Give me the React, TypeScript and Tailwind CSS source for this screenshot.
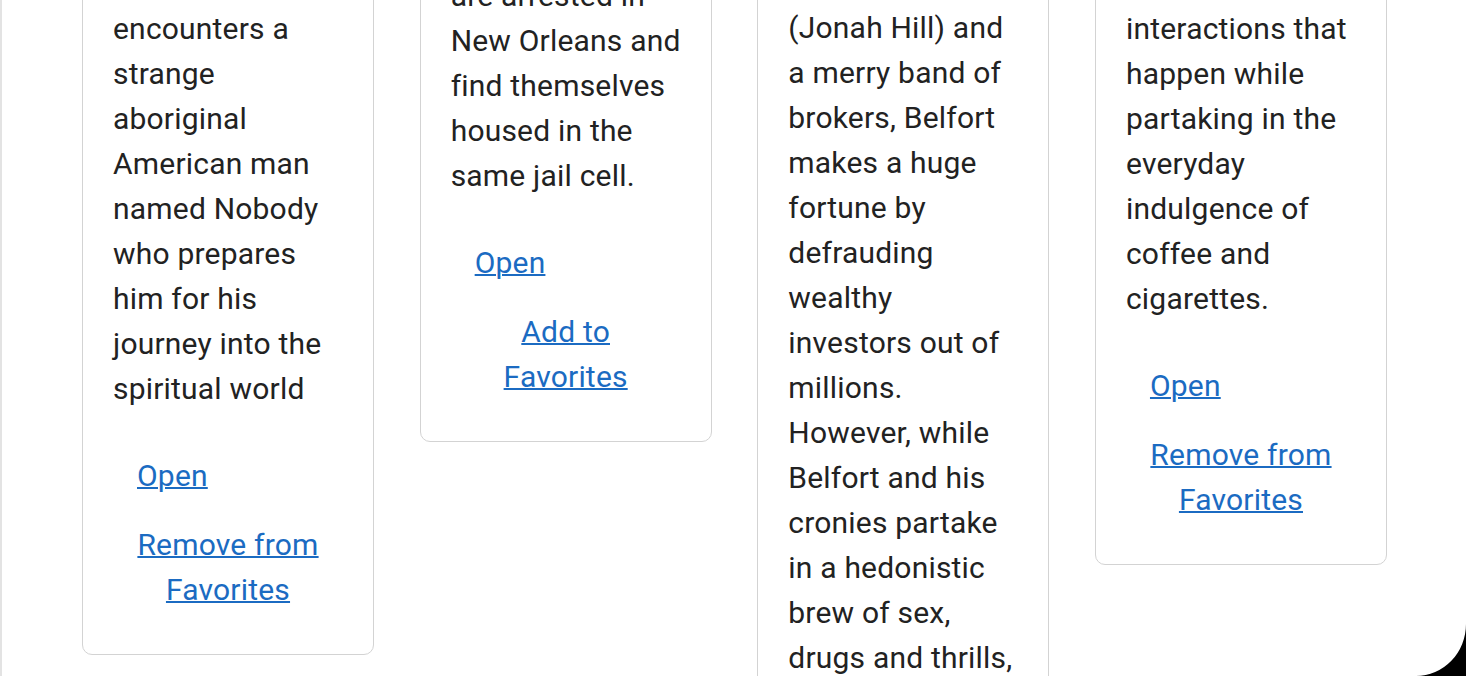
import React from "react";

type Movie = {
  id: number;
  overview: string;
  favorite: boolean;
  offset: string;
};

const movies: Movie[] = [
  {
    id: 1,
    overview:
      "On the run after murdering a man, accountant William Blake encounters a strange aboriginal American man named Nobody who prepares him for his journey into the spiritual world",
    favorite: true,
    offset: "mt-[-205px]",
  },
  {
    id: 2,
    overview:
      "A disc jockey, a small-time pimp and an Italian tourist\nare arrested in New Orleans and find themselves housed in the same jail cell.",
    favorite: false,
    offset: "mt-[-238px]",
  },
  {
    id: 3,
    overview:
      "In 1987, Jordan Belfort (Leonardo DiCaprio) takes an entry-level job at a Wall Street brokerage firm. By the early 1990s, while still in his 20s, Belfort founds his own firm, Stratton Oakmont. Together with his trusted lieutenant\n(Jonah Hill) and a merry band of brokers, Belfort makes a huge fortune by defrauding wealthy investors out of millions. However, while Belfort and his cronies partake in a hedonistic brew of sex, drugs and thrills, the SEC and the FBI close in on his empire of excess.",
    favorite: true,
    offset: "mt-[-791px]",
  },
  {
    id: 4,
    overview:
      "A series of short films about the awkward interactions that happen while partaking in the everyday indulgence of coffee and cigarettes.",
    favorite: true,
    offset: "mt-[-160px]",
  },
];

function MovieCard({ movie }: { movie: Movie }) {
  return (
    <div
      className={`${movie.offset} border border-[#d3d3d3] rounded-[10px] px-[30px] pt-[30px] pb-[42px] bg-white`}
    >
      <p className="whitespace-pre-line text-[30px] leading-[45px] tracking-[0.2px] text-[#222222]">
        {movie.overview}
      </p>
      <div className="mt-[42px] pl-[24px] text-[30px] leading-[45px] tracking-[0.2px]">
        <a href="#" className="text-[#1b6bc2] underline decoration-2">
          Open
        </a>
      </div>
      <div className="mt-[24px] px-[16px] text-center text-[30px] leading-[45px] tracking-[0.2px]">
        <a href="#" className="text-[#1b6bc2] underline decoration-2">
          {movie.favorite ? "Remove from Favorites" : "Add to Favorites"}
        </a>
      </div>
    </div>
  );
}

export default function App() {
  return (
    <div className="relative h-[676px] overflow-hidden bg-white border-l-2 border-[#e3e3e3] font-['Roboto',sans-serif]">
      <div className="grid grid-cols-[repeat(4,292px)] gap-x-[45.67px] pl-[80px] items-start">
        {movies.map((m) => (
          <MovieCard key={m.id} movie={m} />
        ))}
      </div>
      <svg
        className="absolute bottom-0 right-0"
        width="50"
        height="52"
        viewBox="0 0 50 52"
      >
        <path d="M50 0 A50 52 0 0 1 0 52 L50 52 Z" fill="#000" />
      </svg>
    </div>
  );
}
